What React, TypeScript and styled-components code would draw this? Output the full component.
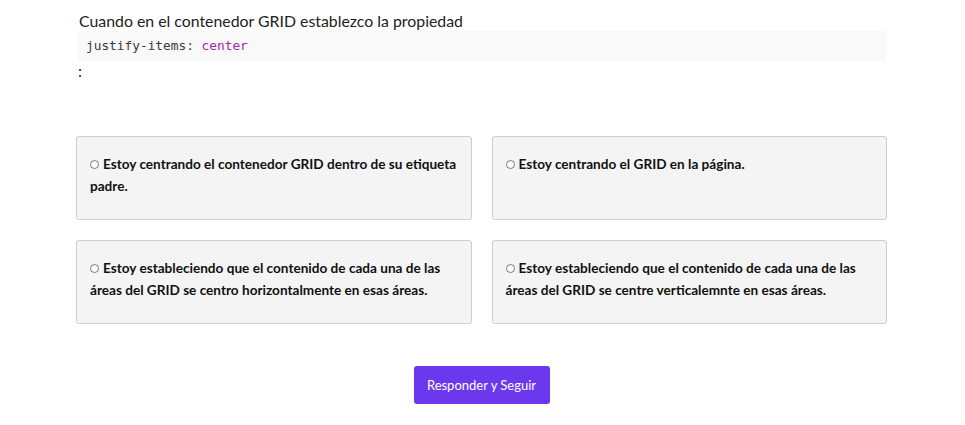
import React, { useState } from 'react';
import styled, { createGlobalStyle } from 'styled-components';

const GlobalStyle = createGlobalStyle`
  body {
    margin: 0;
    background: #ffffff;
    font-family: Lato, 'Open Sans', sans-serif;
    color: #222222;
  }
`;

const Page = styled.div`
  width: 811px;
  margin: 0 0 0 76px;
  padding-top: 11px;
`;

const Question = styled.div`
  padding: 0 2px 0 3px;
  font-size: 15.85px;
  line-height: 20px;
  color: #222222;
`;

const CodeBlock = styled.pre`
  margin: 0 0 0 2px;
  padding: 6px 8px;
  width: 792px;
  background: #f9f9f9;
  font-family: 'DejaVu Sans Mono', monospace;
  font-size: 12.8px;
  line-height: 18px;
  color: #383a42;
`;

const Value = styled.span`
  color: #a626a4;
`;

const Colon = styled.div`
  font-size: 16px;
  line-height: 20px;
  padding-left: 2px;
`;

const Options = styled.div`
  display: grid;
  grid-template-columns: 1fr 1fr;
  gap: 20px 20px;
  margin-top: 55px;
`;

const Card = styled.label<{ $selected: boolean }>`
  display: block;
  box-sizing: border-box;
  height: 84px;
  padding: 16px 12px 0 13px;
  background: ${(p) => (p.$selected ? '#ebe6fd' : '#f4f4f4')};
  border: 1px solid #cccccc;
  border-radius: 3px;
  font-size: 13.6px;
  font-weight: 700;
  line-height: 22px;
  color: #111111;
  cursor: pointer;
`;

const Radio = styled.input`
  width: 9px;
  height: 9px;
  margin: 0 4px 0 0;
  vertical-align: 0px;
`;

const Footer = styled.div`
  display: flex;
  justify-content: center;
  margin-top: 42px;
`;

const Button = styled.button`
  width: 136px;
  height: 38px;
  border: none;
  border-radius: 3px;
  background: #6b38ee;
  color: #ffffff;
  font-family: Lato, sans-serif;
  font-size: 13px;
  cursor: pointer;
`;

const options = [
  'Estoy centrando el contenedor GRID dentro de su etiqueta padre.',
  'Estoy centrando el GRID en la página.',
  'Estoy estableciendo que el contenido de cada una de las áreas del GRID se centro horizontalmente en esas áreas.',
  'Estoy estableciendo que el contenido de cada una de las áreas del GRID se centre verticalemnte en esas áreas.',
];

export default function App() {
  const [selected, setSelected] = useState<number | null>(null);

  return (
    <Page>
      <GlobalStyle />
      <Question>Cuando en el contenedor GRID establezco la propiedad</Question>
      <CodeBlock>
        justify-items: <Value>center</Value>
      </CodeBlock>
      <Colon>:</Colon>
      <Options>
        {options.map((text, i) => (
          <Card key={i} $selected={selected === i}>
            <Radio
              type="radio"
              name="answer"
              checked={selected === i}
              onChange={() => setSelected(i)}
            />
            {text}
          </Card>
        ))}
      </Options>
      <Footer>
        <Button>Responder y Seguir</Button>
      </Footer>
    </Page>
  );
}
